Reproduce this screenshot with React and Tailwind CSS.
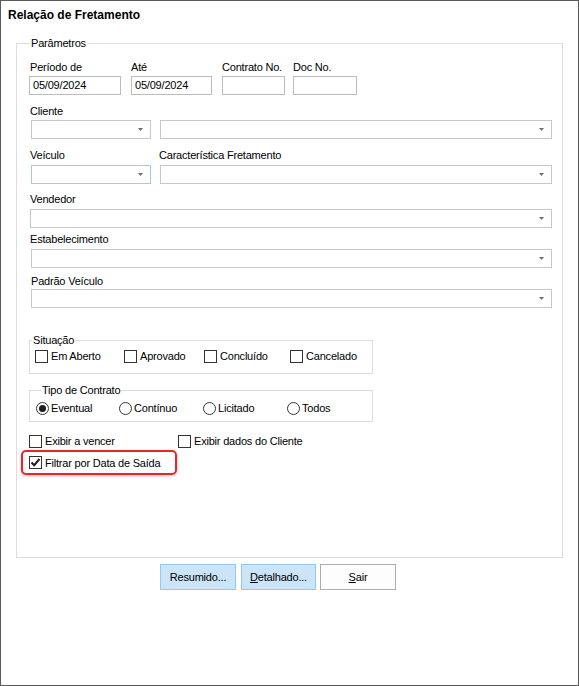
import React from 'react';

// Relação de Fretamento — report filter form (WinForms style)

const Arrow = () => (
  <svg width="5" height="3" viewBox="0 0 5 3" className="block">
    <polygon points="0,0 5,0 2.5,3" fill="#6d6d6d" />
  </svg>
);

const Combo = ({ className = '', focused = false }) => (
  <div
    className={`h-[19px] bg-white border flex items-center justify-end pr-[7px] ${
      focused ? 'border-[#a3c9ec]' : 'border-[#c8c8c8]'
    } ${className}`}
  >
    <Arrow />
  </div>
);

const TextBox = ({ value = '', className = '' }) => (
  <div className={`h-[19px] bg-white border border-[#bcbcbc] pl-[3px] leading-[17px] ${className}`}>
    {value}
  </div>
);

const Label = ({ children, className = '' }) => (
  <div className={`h-[14px] leading-[14px] whitespace-nowrap ${className}`}>{children}</div>
);

const CheckBox = ({ label, checked = false, className = '' }) => (
  <div className={`flex items-center h-[14px] ${className}`}>
    <div className="w-[13px] h-[13px] border border-[#333333] bg-white flex items-center justify-center shrink-0">
      {checked && (
        <svg width="11" height="11" viewBox="0 0 11 11">
          <path d="M1.5 5.5 L4.2 8.2 L9.5 2" fill="none" stroke="#1e1e1e" strokeWidth="2" />
        </svg>
      )}
    </div>
    <span className="ml-[3px] leading-[14px] whitespace-nowrap">{label}</span>
  </div>
);

const Radio = ({ label, checked = false, className = '' }) => (
  <div className={`flex items-center h-[14px] ${className}`}>
    <div className="w-[13px] h-[13px] rounded-full border border-[#333333] bg-white flex items-center justify-center shrink-0">
      {checked && <div className="w-[7px] h-[7px] rounded-full bg-[#1e1e1e]" />}
    </div>
    <span className="ml-[2px] leading-[14px] whitespace-nowrap">{label}</span>
  </div>
);

const Legend = ({ children, className = '' }) => (
  <div className={`-mt-[8px] h-[14px] leading-[14px] px-[1px] bg-white w-fit ${className}`}>{children}</div>
);

export default function App() {
  return (
    <div className="w-[579px] h-[686px] border border-[#5a5a5a] bg-white text-black text-[11px] tracking-[-0.2px] font-['Liberation_Sans',Arial,sans-serif]">
      <div className="h-[42px] pl-[7px] pt-[7px] text-[12px] font-bold leading-[15px] tracking-normal">
        Relação de Fretamento
      </div>

      {/* Parâmetros */}
      <div className="mx-[15px] h-[515px] border border-[#dcdcdc]">
        <Legend className="ml-[13px]">Parâmetros</Legend>

        <div className="pl-[13px] pr-[10px]">
          {/* período / contrato / doc */}
          <div className="flex mt-[10px] -ml-px">
            <div className="w-[92px]">
              <Label className="pl-[1px]">Período de</Label>
              <TextBox className="mt-[2px]" value="05/09/2024" />
            </div>
            <div className="w-[81px] ml-[10px]">
              <Label>Até</Label>
              <TextBox className="mt-[2px]" value="05/09/2024" />
            </div>
            <div className="w-[63px] ml-[10px]">
              <Label>Contrato No.</Label>
              <TextBox className="mt-[2px]" />
            </div>
            <div className="w-[64px] ml-[8px]">
              <Label>Doc No.</Label>
              <TextBox className="mt-[2px]" />
            </div>
          </div>

          <Label className="mt-[9px]">Cliente</Label>
          <div className="flex mt-[2px]">
            <Combo className="w-[120px] ml-[1px]" />
            <Combo className="flex-1 ml-[9px]" />
          </div>

          <div className="flex mt-[9px]">
            <Label className="w-[129px]">Veículo</Label>
            <Label>Característica Fretamento</Label>
          </div>
          <div className="flex mt-[3px]">
            <Combo className="w-[120px] ml-[1px]" focused />
            <Combo className="flex-1 ml-[9px]" />
          </div>

          <Label className="mt-[8px]">Vendedor</Label>
          <Combo className="mt-[3px]" />

          <Label className="mt-[4px]">Estabelecimento</Label>
          <Combo className="mt-[3px] ml-[1px]" />

          <Label className="mt-[6px] pl-[1px]">Padrão Veículo</Label>
          <Combo className="mt-[1px] ml-[1px]" />

          {/* Situação */}
          <div className="mt-[32px] -ml-px w-[344px] h-[34px] border border-[#dcdcdc]">
            <Legend className="ml-[2px]">Situação</Legend>
            <div className="flex mt-[2px] pl-[5px]">
              <CheckBox className="w-[89px]" label="Em Aberto" />
              <CheckBox className="w-[80px]" label="Aprovado" />
              <CheckBox className="w-[86px]" label="Concluído" />
              <CheckBox label="Cancelado" />
            </div>
          </div>

          {/* Tipo de Contrato */}
          <div className="mt-[16px] -ml-px w-[344px] h-[32px] border border-[#dcdcdc]">
            <Legend className="ml-[11px]">Tipo de Contrato</Legend>
            <div className="flex mt-[4px] pl-[6px]">
              <Radio className="w-[83px]" label="Eventual" checked />
              <Radio className="w-[84px]" label="Contínuo" />
              <Radio className="w-[84px]" label="Licitado" />
              <Radio label="Todos" />
            </div>
          </div>

          <div className="flex mt-[12px] -ml-px">
            <CheckBox className="w-[149px]" label="Exibir a vencer" />
            <CheckBox label="Exibir dados do Cliente" />
          </div>

          <div className="mt-[2px] -ml-[9px] w-[156px] h-[25px] border-2 border-[#e5262c] rounded-[5px] shadow-[0_1px_3px_rgba(229,38,44,0.35)] flex items-center pl-[6px]">
            <CheckBox label="Filtrar por Data de Saída" checked />
          </div>
        </div>
      </div>

      {/* botões */}
      <div className="flex mt-[6px] ml-[159px]">
        <button className="w-[76px] h-[26px] bg-[#cce4f7] border border-[#99c6ec] leading-[24px] text-center">
          Resumido...
        </button>
        <button className="w-[75px] h-[26px] ml-[5px] bg-[#cce4f7] border border-[#99c6ec] leading-[24px] text-center">
          <u>D</u>etalhado...
        </button>
        <button className="w-[76px] h-[26px] ml-[4px] bg-[#fdfdfd] border border-[#adadad] leading-[24px] text-center">
          <u>S</u>air
        </button>
      </div>
    </div>
  );
}
